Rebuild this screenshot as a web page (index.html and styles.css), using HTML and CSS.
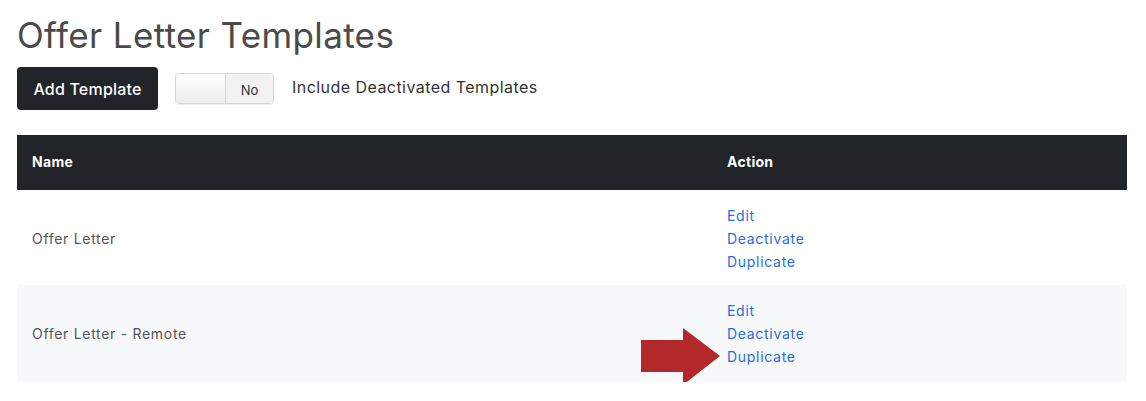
FILE: index.html
```html
<!DOCTYPE html>
<html lang="en">
<head>
    <meta charset="UTF-8">
    <meta name="viewport" content="width=device-width, initial-scale=1.0">
    <title>Offer Letter Templates</title>
    <link rel="stylesheet" href="styles.css">
</head>
<body>
    <div class="page">
        <h1 class="title">Offer Letter Templates</h1>

        <div class="toolbar">
            <button class="btn-dark">Add Template</button>
            <div class="toggle">
                <span class="toggle-handle"></span>
                <span class="toggle-label">No</span>
            </div>
            <span class="toggle-text">Include Deactivated Templates</span>
        </div>

        <table class="templates">
            <thead>
                <tr>
                    <th class="col-name">Name</th>
                    <th>Action</th>
                </tr>
            </thead>
            <tbody>
                <tr>
                    <td>Offer Letter</td>
                    <td class="actions">
                        <a href="#">Edit</a>
                        <a href="#">Deactivate</a>
                        <a href="#">Duplicate</a>
                    </td>
                </tr>
                <tr class="striped">
                    <td>Offer Letter - Remote</td>
                    <td class="actions">
                        <a href="#">Edit</a>
                        <a href="#">Deactivate</a>
                        <span class="pointer">
                            <svg class="arrow" width="80" height="58" viewBox="0 0 80 58">
                                <polygon points="0,12 42,12 42,0 79,28 42,57 42,44 0,44" fill="#b3292b"/>
                            </svg>
                            <a href="#">Duplicate</a>
                        </span>
                    </td>
                </tr>
            </tbody>
        </table>
    </div>
</body>
</html>
```

FILE: styles.css
```css
* {
    margin: 0;
    padding: 0;
    box-sizing: border-box;
}

body {
    font-family: 'Inter', sans-serif;
    background: #fff;
    color: #212529;
}

.page {
    padding: 14px 19px 0 17px;
}

.title {
    font-size: 35px;
    font-weight: 400;
    color: #4a4a4a;
    line-height: 42px;
    letter-spacing: 0.35px;
}

.toolbar {
    display: flex;
    align-items: center;
    margin-top: 11px;
}

.btn-dark {
    font-family: inherit;
    background: #212529;
    color: #fff;
    border: none;
    border-radius: 4px;
    height: 43px;
    width: 141px;
    font-size: 16px;
    font-weight: 500;
    letter-spacing: 0.2px;
    cursor: pointer;
}

.toggle {
    display: flex;
    margin-left: 17px;
    width: 99px;
    height: 31px;
    border: 1px solid #d6d6d6;
    border-radius: 4px;
    overflow: hidden;
    box-shadow: 0 1px 1px rgba(0, 0, 0, 0.08);
}

.toggle-handle {
    width: 50px;
    background: linear-gradient(#fff, #ededed);
    border-right: 1px solid #d6d6d6;
}

.toggle-label {
    flex: 1;
    background: #f2f2f2;
    font-size: 13px;
    color: #333;
    display: flex;
    align-items: center;
    justify-content: center;
    padding-top: 2px;
}

.toggle-text {
    margin-left: 18px;
    margin-bottom: 3px;
    font-size: 16px;
    color: #333;
    letter-spacing: 0.45px;
}

.templates {
    width: 100%;
    margin-top: 25px;
    border-collapse: collapse;
    font-size: 14px;
    letter-spacing: 0.7px;
}

.templates th {
    background: #212529;
    color: #fff;
    text-align: left;
    font-weight: 700;
    height: 55px;
    padding: 0 15px 2px;
    letter-spacing: 0.3px;
}

.templates .col-name {
    width: 695px;
}

.templates td {
    padding: 14px 15px 12px;
    color: #555;
    vertical-align: middle;
}

.templates tr.striped td {
    padding-bottom: 14px;
}

.templates tr.striped {
    background: #f7f8fa;
}

.actions a {
    display: block;
    line-height: 23px;
    color: #2a6ce6;
    text-decoration: none;
}

.pointer {
    position: relative;
    display: block;
}

.arrow {
    position: absolute;
    left: -86px;
    top: -17px;
}
```
